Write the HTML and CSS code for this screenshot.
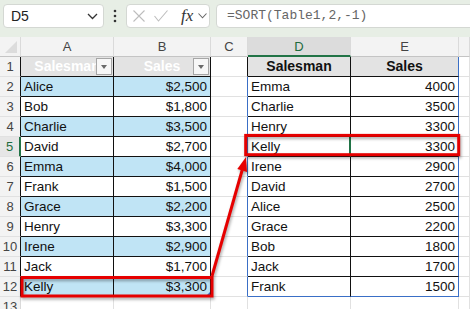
FILE: index.html
```html
<!DOCTYPE html>
<html lang="en">
<head>
    <meta charset="UTF-8">
    <title>SORT Table1</title>
    <link rel="stylesheet" href="styles.css">
</head>
<body>
<div class="page">
    <div class="topbar">
        <div class="namebox">
            <span>D5</span>
            <svg width="11" height="7" viewBox="0 0 11 7"><polyline points="1,1 5.5,5.5 10,1" fill="none" stroke="#333" stroke-width="1.3"/></svg>
        </div>
        <svg class="dots" width="6" height="14" viewBox="0 0 6 14"><circle cx="3" cy="2" r="1.3"/><circle cx="3" cy="7" r="1.3"/><circle cx="3" cy="12" r="1.3"/></svg>
        <div class="fxbox">
            <svg class="ic-x" width="12" height="12" viewBox="0 0 12 12"><path d="M0.5 0.5 L11.5 11.5 M11.5 0.5 L0.5 11.5" stroke="#bdbdbd" stroke-width="1.1"/></svg>
            <svg class="ic-ok" width="14" height="12" viewBox="0 0 14 12"><polyline points="0.5,6 4.5,11 13.5,0.5" fill="none" stroke="#bdbdbd" stroke-width="1.1"/></svg>
            <span class="fx">fx</span>
            <svg class="ic-dd" width="9" height="6" viewBox="0 0 9 6"><polyline points="0.5,0.5 4.5,4.8 8.5,0.5" fill="none" stroke="#666" stroke-width="1.1"/></svg>
        </div>
        <div class="formula">=SORT(Table1,2,-1)</div>
    </div>

    <div class="sheet">
        <!-- column headers -->
        <div class="cell ch corner"><span class="tri"></span></div>
        <div class="cell ch">A</div>
        <div class="cell ch">B</div>
        <div class="cell ch">C</div>
        <div class="cell ch sel">D</div>
        <div class="cell ch">E</div>
        <div class="cell ch"></div>

        <!-- row 1 -->
        <div class="cell rh">1</div>
        <div class="cell t th">Salesman<span class="dd"></span></div>
        <div class="cell t th">Sales<span class="dd"></span></div>
        <div class="cell edge-k"></div>
        <div class="cell s sh">Salesman</div>
        <div class="cell s se sh">Sales</div>
        <div class="cell"></div>

        <div class="cell rh">2</div>
        <div class="cell t band">Alice</div>
        <div class="cell t band num">$2,500</div>
        <div class="cell edge-b"></div>
        <div class="cell s">Emma</div>
        <div class="cell s se num">4000</div>
        <div class="cell"></div>

        <div class="cell rh">3</div>
        <div class="cell t">Bob</div>
        <div class="cell t num">$1,800</div>
        <div class="cell edge-b"></div>
        <div class="cell s">Charlie</div>
        <div class="cell s se num">3500</div>
        <div class="cell"></div>

        <div class="cell rh">4</div>
        <div class="cell t band">Charlie</div>
        <div class="cell t band num">$3,500</div>
        <div class="cell edge-b"></div>
        <div class="cell s">Henry</div>
        <div class="cell s se num">3300</div>
        <div class="cell"></div>

        <div class="cell rh cur">5</div>
        <div class="cell t">David</div>
        <div class="cell t num">$2,700</div>
        <div class="cell edge-b"></div>
        <div class="cell s active">Kelly</div>
        <div class="cell s se num">3300</div>
        <div class="cell"></div>

        <div class="cell rh">6</div>
        <div class="cell t band">Emma</div>
        <div class="cell t band num">$4,000</div>
        <div class="cell edge-b"></div>
        <div class="cell s">Irene</div>
        <div class="cell s se num">2900</div>
        <div class="cell"></div>

        <div class="cell rh">7</div>
        <div class="cell t">Frank</div>
        <div class="cell t num">$1,500</div>
        <div class="cell edge-b"></div>
        <div class="cell s">David</div>
        <div class="cell s se num">2700</div>
        <div class="cell"></div>

        <div class="cell rh">8</div>
        <div class="cell t band">Grace</div>
        <div class="cell t band num">$2,200</div>
        <div class="cell edge-b"></div>
        <div class="cell s">Alice</div>
        <div class="cell s se num">2500</div>
        <div class="cell"></div>

        <div class="cell rh">9</div>
        <div class="cell t">Henry</div>
        <div class="cell t num">$3,300</div>
        <div class="cell edge-b"></div>
        <div class="cell s">Grace</div>
        <div class="cell s se num">2200</div>
        <div class="cell"></div>

        <div class="cell rh">10</div>
        <div class="cell t band">Irene</div>
        <div class="cell t band num">$2,900</div>
        <div class="cell edge-b"></div>
        <div class="cell s">Bob</div>
        <div class="cell s se num">1800</div>
        <div class="cell"></div>

        <div class="cell rh">11</div>
        <div class="cell t">Jack</div>
        <div class="cell t num">$1,700</div>
        <div class="cell edge-b"></div>
        <div class="cell s">Jack</div>
        <div class="cell s se num">1700</div>
        <div class="cell"></div>

        <div class="cell rh">12</div>
        <div class="cell t band">Kelly</div>
        <div class="cell t band num resize">$3,300</div>
        <div class="cell edge-b"></div>
        <div class="cell s bot">Frank</div>
        <div class="cell s se bot num">1500</div>
        <div class="cell"></div>

        <div class="cell rh plain">13</div>
        <div class="cell"></div>
        <div class="cell"></div>
        <div class="cell"></div>
        <div class="cell"></div>
        <div class="cell"></div>
        <div class="cell"></div>
    </div>

    <svg class="marks" width="470" height="309" viewBox="0 0 470 309">
        <rect x="22" y="277.5" width="190" height="18.5" fill="none" stroke="#e60000" stroke-width="3"/>
        <rect x="245.7" y="135.4" width="213" height="19.3" fill="none" stroke="#e60000" stroke-width="3"/>
        <line x1="212" y1="276" x2="242.2" y2="170" stroke="#e60000" stroke-width="3"/>
        <polygon points="246,157 247,172 237.3,169.1" fill="#e60000"/>
    </svg>
</div>
</body>
</html>
```

FILE: styles.css
```css
* {
    box-sizing: border-box;
}
body {
    margin: 0;
    background: white;
    font-family: 'Liberation Sans', Arial, sans-serif;
}
.page {
    position: relative;
    width: 470px;
    height: 309px;
    overflow: hidden;
}
.topbar {
    height: 37px;
    background: #e7eee5;
    display: flex;
    align-items: flex-start;
    padding: 4px 0 0 3px;
    white-space: nowrap;
}
.topbar > * {
    flex-shrink: 0;
}
.namebox {
    width: 101px;
    height: 24px;
    background: white;
    border: 1px solid #d4d8d3;
    border-radius: 4px;
    display: flex;
    align-items: center;
    justify-content: space-between;
    padding: 0 5px 0 7px;
    font-size: 14px;
    color: #222;
}
.dots {
    margin: 5px 0 0 8px;
    fill: #333;
}
.fxbox {
    width: 84px;
    height: 24px;
    margin-left: 8px;
    background: white;
    border: 1px solid #d4d8d3;
    border-radius: 4px;
    display: flex;
    align-items: center;
    padding-left: 6px;
}
.ic-ok {
    margin-left: 9px;
}
.fx {
    margin-left: 13px;
    font-family: 'Liberation Serif', 'Times New Roman', serif;
    font-style: italic;
    font-size: 17px;
    color: #333;
}
.ic-dd {
    margin-left: 5px;
}
.formula {
    width: 270px;
    height: 24px;
    margin-left: 6px;
    background: white;
    border: 1px solid #d4d8d3;
    border-radius: 4px;
    padding: 0 0 0 10px;
    font-family: 'Liberation Mono', 'Courier New', monospace;
    font-size: 13px;
    line-height: 22px;
    color: #666;
}

.sheet {
    display: grid;
    grid-template-columns: 21px 93px 97px 37px 103px 108px 1fr;
    grid-auto-rows: 20px;
}
.cell {
    position: relative;
    border-right: 1px solid #e1e1e1;
    border-bottom: 1px solid #e1e1e1;
    padding: 0 3px;
    font-size: 13.5px;
    line-height: 19px;
    color: #111;
    white-space: nowrap;
    overflow: hidden;
}
.num {
    text-align: right;
}
.ch {
    background: #f3f3f3;
    border-right-color: #dadada;
    border-bottom-color: #c4c4c4;
    text-align: center;
    font-size: 13px;
    color: #444;
}
.ch.sel {
    background: #dcdcdc;
    color: #1d6b3e;
    border-bottom: 2px solid #217346;
}
.corner .tri {
    position: absolute;
    right: 3px;
    bottom: 3px;
    width: 0;
    height: 0;
    border-left: 12px solid transparent;
    border-bottom: 12px solid #dcdcdc;
}
.rh {
    background: #f3f3f3;
    border-right-color: #111;
    text-align: center;
    font-size: 13px;
    padding: 0;
    color: #444;
}
.rh.plain {
    border-right-color: #dadada;
}
.rh.cur {
    color: #1d6b3e;
    background: #e6e6e6;
    border-right: 2px solid #217346;
}

/* source table A:B */
.t {
    border-right-color: #111;
    border-bottom-color: #111;
}
.band {
    background: #c0e4f5;
}
.th {
    background: #e3e3e3;
    color: white;
    font-weight: bold;
    font-size: 14px;
    text-align: center;
}
.th .dd {
    position: absolute;
    right: 1px;
    top: 1px;
    width: 16px;
    height: 17px;
    background: #f7f7f7;
    border: 1px solid #a6a6a6;
}
.th .dd::after {
    content: '';
    position: absolute;
    left: 4px;
    top: 6px;
    border-left: 3.5px solid transparent;
    border-right: 3.5px solid transparent;
    border-top: 4px solid #6a6a6a;
}
.resize::after {
    content: '';
    position: absolute;
    right: 0;
    bottom: 0;
    border-left: 4px solid transparent;
    border-bottom: 4px solid #3b6cc4;
}

/* sorted result D:E */
.edge-k {
    border-right-color: #111;
}
.edge-b {
    border-right-color: #3a6fc6;
}
.s {
    border-right-color: #111;
    border-bottom-color: #111;
}
.s.se {
    border-right-color: #3a6fc6;
}
.s.bot {
    border-bottom-color: #3a6fc6;
}
.sh {
    background: #e3e3e3;
    font-weight: bold;
    font-size: 14px;
    text-align: center;
    color: #111;
}
.active {
    border-right: 2px solid #217346;
}
.active::after {
    content: '';
    position: absolute;
    right: -3px;
    bottom: -3px;
    width: 5px;
    height: 5px;
    background: #217346;
}

.marks {
    position: absolute;
    left: 0;
    top: 0;
    pointer-events: none;
    filter: drop-shadow(1px 2px 1.5px rgba(0,0,0,0.35));
}
```
